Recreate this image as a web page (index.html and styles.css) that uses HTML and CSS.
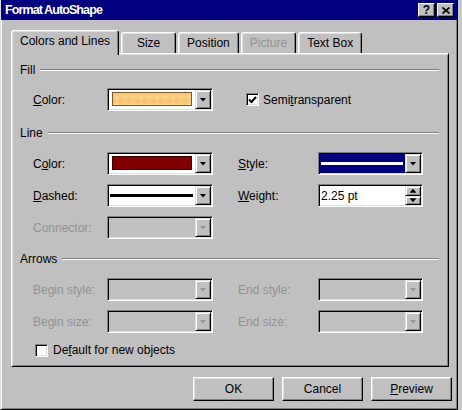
FILE: index.html
```html
<!DOCTYPE html>
<html lang="en">
<head>
  <meta charset="UTF-8">
  <title>Format AutoShape</title>
  <link rel="stylesheet" href="styles.css">
</head>
<body>
  <div class="window">
    <!-- Title Bar -->
    <div class="titlebar">
      <span class="title">Format AutoShape</span>
      <div class="title-buttons">
        <span class="title-btn help">?</span>
        <span class="title-btn close">
          <svg width="8" height="7" viewBox="0 0 8 7"><path d="M0.5 0.5L7.5 6.5M7.5 0.5L0.5 6.5" stroke="#000" stroke-width="1.6"/></svg>
        </span>
      </div>
    </div>

    <!-- Tabs -->
    <div class="tabs">
      <div class="tab active">Colors and Lines</div>
      <div class="tab">Size</div>
      <div class="tab">Position</div>
      <div class="tab disabled">Picture</div>
      <div class="tab">Text Box</div>
    </div>

    <div class="panel">
      <!-- Fill -->
      <div class="section-title">Fill</div>
      <div class="grid fill-grid">
        <span class="label"><u>C</u>olor:</span>
        <div class="combo">
          <span class="combo-value"><span class="swatch swatch-fill"></span></span>
          <span class="combo-btn"></span>
        </div>
        <label class="check semi">
          <span class="checkbox">
            <svg width="9" height="8" viewBox="0 0 9 8"><path d="M1 3.5L3.5 6L8 1" fill="none" stroke="#000" stroke-width="2"/></svg>
          </span>
          <span>Semi<u>t</u>ransparent</span>
        </label>
      </div>

      <!-- Line -->
      <div class="section-title line-title">Line</div>
      <div class="grid line-grid">
        <span class="label">C<u>o</u>lor:</span>
        <div class="combo">
          <span class="combo-value"><span class="swatch swatch-line"></span></span>
          <span class="combo-btn"></span>
        </div>
        <span></span>
        <span class="label"><u>S</u>tyle:</span>
        <div class="combo selected">
          <span class="combo-value flat"><span class="stroke white"></span></span>
          <span class="combo-btn"></span>
        </div>

        <span class="label"><u>D</u>ashed:</span>
        <div class="combo">
          <span class="combo-value flat"><span class="stroke black"></span></span>
          <span class="combo-btn"></span>
        </div>
        <span></span>
        <span class="label"><u>W</u>eight:</span>
        <div class="combo spin">
          <span class="spin-value">2.25 pt</span>
          <span class="spin-btns">
            <span class="spin-btn up"></span>
            <span class="spin-btn down"></span>
          </span>
        </div>

        <span class="label disabled">Connector:</span>
        <div class="combo disabled">
          <span class="combo-value"></span>
          <span class="combo-btn"></span>
        </div>
      </div>

      <!-- Arrows -->
      <div class="section-title arrows-title">Arrows</div>
      <div class="grid arrows-grid">
        <span class="label disabled">Begin style:</span>
        <div class="combo disabled">
          <span class="combo-value"></span>
          <span class="combo-btn"></span>
        </div>
        <span></span>
        <span class="label disabled">End style:</span>
        <div class="combo disabled">
          <span class="combo-value"></span>
          <span class="combo-btn"></span>
        </div>

        <span class="label disabled">Begin size:</span>
        <div class="combo disabled">
          <span class="combo-value"></span>
          <span class="combo-btn"></span>
        </div>
        <span></span>
        <span class="label disabled">End size:</span>
        <div class="combo disabled">
          <span class="combo-value"></span>
          <span class="combo-btn"></span>
        </div>
      </div>

      <label class="check default-check">
        <span class="checkbox"></span>
        <span>De<u>f</u>ault for new objects</span>
      </label>
    </div>

    <!-- Dialog Buttons -->
    <div class="actions">
      <button class="btn">OK</button>
      <button class="btn">Cancel</button>
      <button class="btn"><u>P</u>review</button>
    </div>
  </div>
</body>
</html>
```

FILE: styles.css
```css
/* General Styles */
body {
  margin: 0;
  font-family: "Liberation Sans", Arial, sans-serif;
  font-size: 12px;
  color: #000;
  background-color: #c8c8c8;
}

u {
  text-decoration-thickness: 1px;
  text-underline-offset: 1px;
}

.window {
  width: 458px;
  height: 410px;
  box-sizing: border-box;
  display: flex;
  flex-direction: column;
  padding: 0 2px 2px 2px;
  background-color: #c0c0c0;
  border: 1px solid;
  border-top: none;
  border-color: #dfdfdf #000 #000 #dfdfdf;
  box-shadow: inset 1px 0 #fff, inset -1px -1px #808080;
}

/* Title Bar */
.titlebar {
  height: 20px;
  display: flex;
  align-items: center;
  justify-content: space-between;
  padding: 0 3px 0 4px;
  margin: 0 -2px;
  background-color: #000080;
  color: #fff;
  font-weight: bold;
  font-size: 12.5px;
  letter-spacing: -0.9px;
}

.title-buttons {
  display: flex;
  gap: 2px;
}

.title-btn {
  width: 17px;
  height: 14px;
  box-sizing: border-box;
  display: flex;
  align-items: center;
  justify-content: center;
  background-color: #c0c0c0;
  color: #000;
  border: 1px solid;
  border-color: #fff #000 #000 #fff;
  box-shadow: inset -1px -1px #808080;
  font-size: 12px;
  line-height: 12px;
  letter-spacing: 0;
}

/* Tabs */
.tabs {
  display: flex;
  align-items: flex-end;
  height: 25px;
  margin: 10px 0 0 8px;
}

.tab {
  height: 21px;
  min-width: 55px;
  box-sizing: border-box;
  display: flex;
  align-items: center;
  justify-content: center;
  padding: 0 8px 1px;
  margin-right: 2px;
  margin-bottom: 2px;
  border: 1px solid;
  border-bottom: none;
  border-color: #fff #000 transparent #fff;
  border-radius: 3px 3px 0 0;
  box-shadow: inset -1px 0 #808080, inset 1px 1px #dfdfdf;
  background-color: #c0c0c0;
}

.tab.active {
  height: 25px;
  margin-bottom: 0;
  padding: 0 8px 4px;
  position: relative;
  z-index: 1;
}

.tab.disabled {
  color: #939393;
}

/* Panel */
.panel {
  height: 314px;
  box-sizing: border-box;
  margin: -2px 6px 0 8px;
  padding: 9px 9px 0 8px;
  border: 1px solid;
  border-color: #fff #000 #000 #fff;
  box-shadow: inset 1px 1px #dfdfdf, inset -1px -1px #808080;
}

.section-title {
  height: 14px;
  line-height: 14px;
  display: flex;
  align-items: center;
}

.section-title::after {
  content: "";
  flex: 1;
  margin-left: 5px;
  border-top: 1px solid #808080;
  border-bottom: 1px solid #fff;
}

.line-title {
  margin-top: 15px;
}

.arrows-title {
  margin-top: 13px;
}

.grid {
  display: grid;
  grid-template-columns: 74px 106px 25px 80px 105px;
  grid-auto-rows: 23px;
  row-gap: 9px;
  align-items: center;
  margin-left: 13px;
}

.fill-grid {
  margin-top: 11px;
}

.line-grid,
.arrows-grid {
  margin-top: 12px;
}

.label.disabled {
  color: #939393;
}

/* Combo Box */
.combo {
  height: 23px;
  box-sizing: border-box;
  display: flex;
  padding: 1px;
  background-color: #fff;
  border: 1px solid;
  border-color: #808080 #fff #fff #808080;
  box-shadow: inset 1px 1px #000, inset -1px -1px #dfdfdf;
}

.combo.disabled {
  background-color: #c0c0c0;
}

.combo.selected {
  background-color: #000080;
}

.combo-value {
  flex: 1;
  display: flex;
  padding: 2px 3px 3px 3px;
}

.combo-value.flat {
  align-items: center;
  padding: 0 2px 0 1px;
}

.swatch {
  flex: 1;
  border: 1px solid #000;
}

.swatch-fill {
  background-color: #fcc878;
  background-image:
    radial-gradient(circle, #ffdca0 1.2px, transparent 2px),
    radial-gradient(circle, #f9c070 1.2px, transparent 2px);
  background-size: 8px 8px, 8px 8px;
  background-position: 0 0, 4px 4px;
  border-color: #7a5a2a;
}

.swatch-line {
  background-color: #800000;
  border-color: #400000;
}

.stroke {
  flex: 1;
  height: 3px;
}

.stroke.white {
  background-color: #fff;
}

.stroke.black {
  background-color: #000;
}

.combo-btn,
.spin-btn {
  box-sizing: border-box;
  display: flex;
  align-items: center;
  justify-content: center;
  background-color: #c0c0c0;
  border: 1px solid;
  border-color: #dfdfdf #000 #000 #dfdfdf;
  box-shadow: inset 1px 1px #fff, inset -1px -1px #808080;
}

.combo-btn {
  width: 16px;
}

.combo-btn::after {
  content: "";
  width: 7px;
  height: 4px;
  background-color: #000;
  clip-path: polygon(0 0, 100% 0, 50% 100%);
}

.combo.disabled .combo-btn::after {
  background-color: #939393;
}

/* Spin Box */
.spin-value {
  flex: 1;
  display: flex;
  align-items: center;
  padding-left: 1px;
}

.spin-btns {
  width: 16px;
  display: flex;
  flex-direction: column;
}

.spin-btn {
  flex: 1;
}

.spin-btn::after {
  content: "";
  width: 7px;
  height: 4px;
  background-color: #000;
}

.spin-btn.up::after {
  clip-path: polygon(50% 0, 100% 100%, 0 100%);
}

.spin-btn.down::after {
  clip-path: polygon(0 0, 100% 0, 50% 100%);
}

/* Checkboxes */
.check {
  display: flex;
  align-items: center;
  gap: 5px;
}

.semi {
  grid-column: 4 / span 2;
  margin-left: 8px;
  gap: 4px;
}

.checkbox {
  width: 13px;
  height: 13px;
  box-sizing: border-box;
  display: flex;
  align-items: center;
  justify-content: center;
  background-color: #fff;
  border: 1px solid;
  border-color: #808080 #fff #fff #808080;
  box-shadow: inset 1px 1px #000, inset -1px -1px #dfdfdf;
}

.default-check {
  height: 14px;
  margin: 10px 0 0 15px;
}

/* Dialog Buttons */
.actions {
  display: flex;
  justify-content: flex-end;
  gap: 8px;
  margin: 10px 3px 0 0;
}

.btn {
  width: 81px;
  height: 24px;
  padding: 0;
  font-family: inherit;
  font-size: 12px;
  color: #000;
  background-color: #c0c0c0;
  border: 1px solid;
  border-color: #fff #000 #000 #fff;
  box-shadow: inset -1px -1px #808080, inset 1px 1px #dfdfdf;
}
```
